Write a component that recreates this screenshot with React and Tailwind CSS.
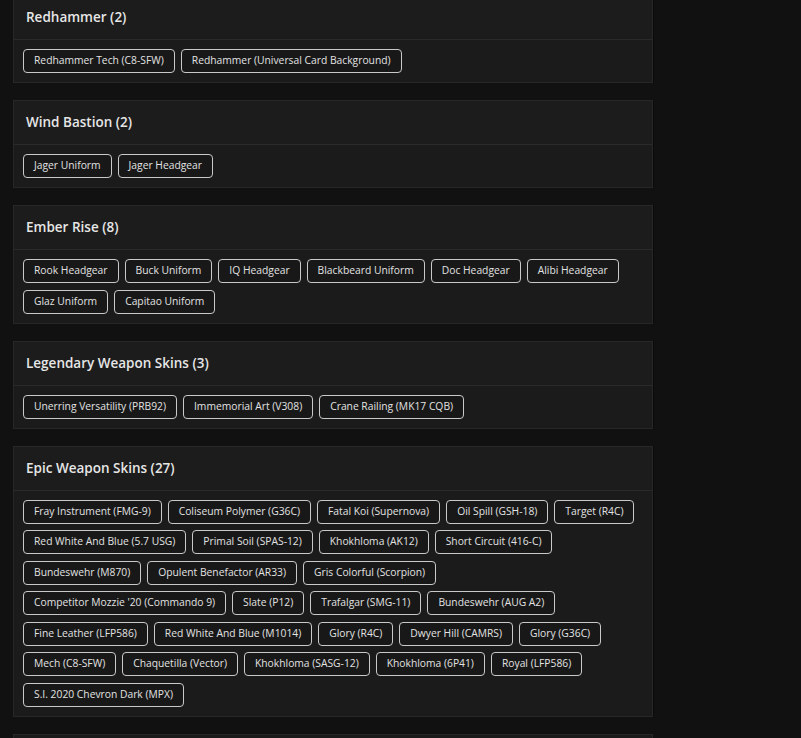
import React from 'react'

const sections = [
  { title: 'Redhammer', items: ['Redhammer Tech (C8-SFW)', 'Redhammer (Universal Card Background)'] },
  { title: 'Wind Bastion', items: ['Jager Uniform', 'Jager Headgear'] },
  {
    title: 'Ember Rise',
    items: ['Rook Headgear', 'Buck Uniform', 'IQ Headgear', 'Blackbeard Uniform', 'Doc Headgear', 'Alibi Headgear', 'Glaz Uniform', 'Capitao Uniform'],
  },
  { title: 'Legendary Weapon Skins', items: ['Unerring Versatility (PRB92)', 'Immemorial Art (V308)', 'Crane Railing (MK17 CQB)'] },
  {
    title: 'Epic Weapon Skins',
    items: [
      'Fray Instrument (FMG-9)', 'Coliseum Polymer (G36C)', 'Fatal Koi (Supernova)', 'Oil Spill (GSH-18)', 'Target (R4C)',
      'Red White And Blue (5.7 USG)', 'Primal Soil (SPAS-12)', 'Khokhloma (AK12)', 'Short Circuit (416-C)',
      'Bundeswehr (M870)', 'Opulent Benefactor (AR33)', 'Gris Colorful (Scorpion)',
      "Competitor Mozzie '20 (Commando 9)", 'Slate (P12)', 'Trafalgar (SMG-11)', 'Bundeswehr (AUG A2)',
      'Fine Leather (LFP586)', 'Red White And Blue (M1014)', 'Glory (R4C)', 'Dwyer Hill (CAMRS)', 'Glory (G36C)',
      'Mech (C8-SFW)', 'Chaquetilla (Vector)', 'Khokhloma (SASG-12)', 'Khokhloma (6P41)', 'Royal (LFP586)',
      'S.I. 2020 Chevron Dark (MPX)',
    ],
  },
]

// Section card
const Section = ({ title, items }) => {
  return (
    <div className="w-[640px] bg-[#1b1b1b] border border-[#272727] shadow-[1px_0_0_#0b0b0b]">
      <div className="h-[44px] flex items-center px-[12px] border-b border-[#2a2a2a] bg-[#1c1c1c]">
        <h2 className="text-[13.5px] font-semibold text-[#e6e6e6]">
          {title} ({items.length})
        </h2>
      </div>
      <div className="flex flex-wrap gap-x-[6px] gap-y-[6.5px] pl-[9px] pr-[8px] pt-[9px] pb-[9px]">
        {items.map((item) => (
          <span
            key={item}
            className="h-[24px] flex items-center px-[10px] rounded-[4px] border border-[#c9c9c9] bg-[#181818] text-[10.3px] text-[#e2e2e2] whitespace-nowrap"
          >
            {item}
          </span>
        ))}
      </div>
    </div>
  )
}

export default function App() {
  return (
    <div className="h-[738px] overflow-hidden bg-[#111111]" style={{ fontFamily: '"Open Sans", "Liberation Sans", sans-serif' }}>
      <div className="flex flex-col gap-[17px] pl-[13px] -mt-[5px]">
        {sections.map((s) => (
          <Section key={s.title} title={s.title} items={s.items} />
        ))}
        <div className="w-[640px] h-[44px] shrink-0 bg-[#1b1b1b] border border-[#272727]" />
      </div>
    </div>
  )
}
